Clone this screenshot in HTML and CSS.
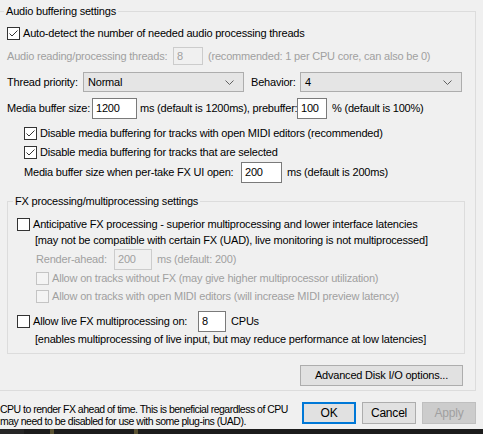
FILE: index.html
```html
<!DOCTYPE html>
<html>
<head>
    <title>Preferences - Buffering</title>
    <meta name="viewport" content="width=device-width, initial-scale=1">
    <link rel="stylesheet" href="styles.css">
</head>
<body>
    <fieldset class="group audio">
        <legend>Audio buffering settings</legend>

        <div class="row r1">
            <span class="cb"><svg width="13" height="13" viewBox="0 0 13 13"><polyline points="2.5,6.5 5,9 10.5,3.5" fill="none" stroke="#333" stroke-width="1"/></svg></span>
            <span class="cb-text">Auto-detect the number of needed audio processing threads</span>
        </div>

        <div class="row r2 off">
            <span class="lbl w-threads">Audio reading/processing threads:</span>
            <span class="edit edit-off w-threads-box">8</span>
            <span class="after">(recommended: 1 per CPU core, can also be 0)</span>
        </div>

        <div class="row r3">
            <span class="lbl w-prio">Thread priority:</span>
            <div class="combo w-combo">
                <span>Normal</span>
                <svg width="9" height="5" viewBox="0 0 9 5"><polyline points="0.5,0.5 4.5,4.5 8.5,0.5" fill="none" stroke="#606060"/></svg>
            </div>
            <span class="lbl w-behav">Behavior:</span>
            <div class="combo w-combo2">
                <span>4</span>
                <svg width="9" height="5" viewBox="0 0 9 5"><polyline points="0.5,0.5 4.5,4.5 8.5,0.5" fill="none" stroke="#606060"/></svg>
            </div>
        </div>

        <div class="row r4">
            <span class="lbl w-mbs">Media buffer size:</span>
            <span class="edit w-mbs-box">1200</span>
            <span class="lbl w-pre">ms (default is 1200ms), prebuffer:</span>
            <span class="edit w-pre-box">100</span>
            <span class="after">% (default is 100%)</span>
        </div>

        <div class="row r5 indent">
            <span class="cb"><svg width="13" height="13" viewBox="0 0 13 13"><polyline points="2.5,6.5 5,9 10.5,3.5" fill="none" stroke="#333" stroke-width="1"/></svg></span>
            <span class="cb-text">Disable media buffering for tracks with open MIDI editors (recommended)</span>
        </div>

        <div class="row r6 indent">
            <span class="cb"><svg width="13" height="13" viewBox="0 0 13 13"><polyline points="2.5,6.5 5,9 10.5,3.5" fill="none" stroke="#333" stroke-width="1"/></svg></span>
            <span class="cb-text">Disable media buffering for tracks that are selected</span>
        </div>

        <div class="row r7 indent">
            <span class="lbl w-take">Media buffer size when per-take FX UI open:</span>
            <span class="edit w-take-box">200</span>
            <span class="after">ms (default is 200ms)</span>
        </div>

        <fieldset class="group fx">
            <legend>FX processing/multiprocessing settings</legend>

            <div class="row ra">
                <span class="cb"></span>
                <span class="cb-text">Anticipative FX processing - superior multiprocessing and lower interface latencies</span>
            </div>

            <div class="row rb note">[may not be compatible with certain FX (UAD), live monitoring is not multiprocessed]</div>

            <div class="row rc off sub">
                <span class="lbl w-ahead">Render-ahead:</span>
                <span class="edit edit-off w-ahead-box">200</span>
                <span class="after">ms (default: 200)</span>
            </div>

            <div class="row rd off sub">
                <span class="cb cb-off"></span>
                <span class="cb-text">Allow on tracks without FX (may give higher multiprocessor utilization)</span>
            </div>

            <div class="row re off sub">
                <span class="cb cb-off"></span>
                <span class="cb-text">Allow on tracks with open MIDI editors (will increase MIDI preview latency)</span>
            </div>

            <div class="row rf">
                <span class="cb"></span>
                <span class="cb-text w-live">Allow live FX multiprocessing on:</span>
                <span class="edit w-live-box">8</span>
                <span class="after">CPUs</span>
            </div>

            <div class="row rg note">[enables multiprocessing of live input, but may reduce performance at low latencies]</div>
        </fieldset>

        <button class="btn disk">Advanced Disk I/O options...</button>
    </fieldset>

    <div class="footer">
        <p class="help">CPU to render FX ahead of time. This is beneficial regardless of CPU<br>may need to be disabled for use with some plug-ins (UAD).</p>
        <div class="buttons">
            <button class="btn btn-default">OK</button>
            <button class="btn">Cancel</button>
            <button class="btn" disabled>Apply</button>
        </div>
    </div>

    <div class="taskbar">
        <span class="tb-a"></span>
        <span class="tb-b"></span>
        <span class="tb-c"></span>
    </div>
</body>
</html>
```

FILE: styles.css
```css
html, body { margin: 0; height: 434px; overflow: hidden; }
body { background: #f0f0f0; color: #000; font: 11px/13px 'Liberation Sans', Arial, sans-serif; letter-spacing: -0.2px; width: 483px; }

.group { border: 1px solid #dcdcdc; margin: 0; min-width: 0; box-sizing: border-box; }
.group > legend { padding: 0 2px; line-height: 13px; }

.audio { width: 482px; margin: 5px 0 0 -6px; padding: 0 12px 4px 12px; }
.audio > legend { margin-left: -3px; }
.fx { width: 458px; margin-top: 12px; padding: 0 9px 7px 9px; }
.fx > legend { margin-left: -4px; }

.row { display: flex; align-items: center; white-space: nowrap; }
.r1 { height: 13px; margin-top: 9px; }
.r2 { height: 18px; margin-top: 7px; }
.r3 { height: 20px; margin-top: 7px; }
.r4 { height: 21px; margin-top: 6px; }
.r5 { height: 13px; margin-top: 8px; }
.r6 { height: 13px; margin-top: 6px; }
.r7 { height: 21px; margin-top: 3px; }
.ra { height: 13px; margin-top: 10px; }
.rb { height: 13px; margin-top: 3px; }
.rc { height: 21px; margin-top: 2px; }
.rd { height: 13px; margin-top: 2px; }
.re { height: 13px; margin-top: 5px; }
.rf { height: 21px; margin-top: 8px; }
.rg { height: 13px; margin-top: 1px; }

.indent { padding-left: 17px; }
.sub { padding-left: 19px; }
.note { padding-left: 18px; }
.off { color: #a0a0a0; }

.cb { width: 13px; height: 13px; box-sizing: border-box; border: 1px solid #333; background: #fff; flex: none; }
.cb svg { display: block; margin: -1px; }
.cb-off { border-color: #c4c4c4; background: #f4f4f4; }
.cb-text { margin-left: 3px; }

.lbl { flex: none; }
.after { margin-left: 5px; }
.w-threads { width: 166px; }
.w-prio { width: 76px; }
.w-behav { width: 49px; margin-left: 7px; }
.w-mbs { width: 85px; }
.w-pre { width: 157px; margin-left: 3px; }
.w-take { width: 217px; }
.w-ahead { width: 78px; }
.w-live { width: 165px; }

.edit { box-sizing: border-box; height: 100%; border: 1px solid #7a7a7a; background: #fff; padding: 0 3px; display: flex; align-items: center; flex: none; }
.edit-off { border-color: #ccc; background: #f0f0f0; color: #a0a0a0; }
.w-threads-box { width: 30px; }
.w-mbs-box { width: 45px; }
.w-pre-box { width: 30px; }
.w-take-box { width: 41px; }
.w-ahead-box { width: 38px; }
.w-live-box { width: 28px; }

.combo { box-sizing: border-box; height: 20px; border: 1px solid #adadad; background: #e5e5e5; display: flex; align-items: center; justify-content: space-between; padding: 0 9px 0 4px; flex: none; }
.w-combo { width: 161px; }
.w-combo2 { width: 162px; }

.btn { box-sizing: border-box; font: inherit; letter-spacing: inherit; color: #000; background: #e1e1e1; border: 1px solid #adadad; padding: 0; margin: 0; }
.btn:disabled { background: #cccccc; border-color: #bfbfbf; color: #a0a0a0; }
.btn-default { border: 2px solid #0078d7; }
.disk { display: block; width: 163px; height: 21px; margin: 11px 0 0 auto; }

.footer { display: flex; justify-content: space-between; height: 27px; margin-top: 11px; }
.help { margin: 1px 0 0 0; font: 10.5px/12px 'Liberation Sans', Arial, sans-serif; letter-spacing: -0.5px; white-space: nowrap; color: #000; min-width: 0; }
.buttons { display: flex; gap: 6px; margin-right: 7px; flex: none; }
.buttons .btn { width: 54px; height: 22px; font-size: 12px; }

.taskbar { height: 5px; background: #1c1c1c; display: flex; }
.tb-a { width: 24px; background: #262626; }
.tb-b { width: 4px; margin-left: 26px; background: #5a5232; }
.tb-c { width: 4px; margin-left: 80px; background: #5a5232; }
```
